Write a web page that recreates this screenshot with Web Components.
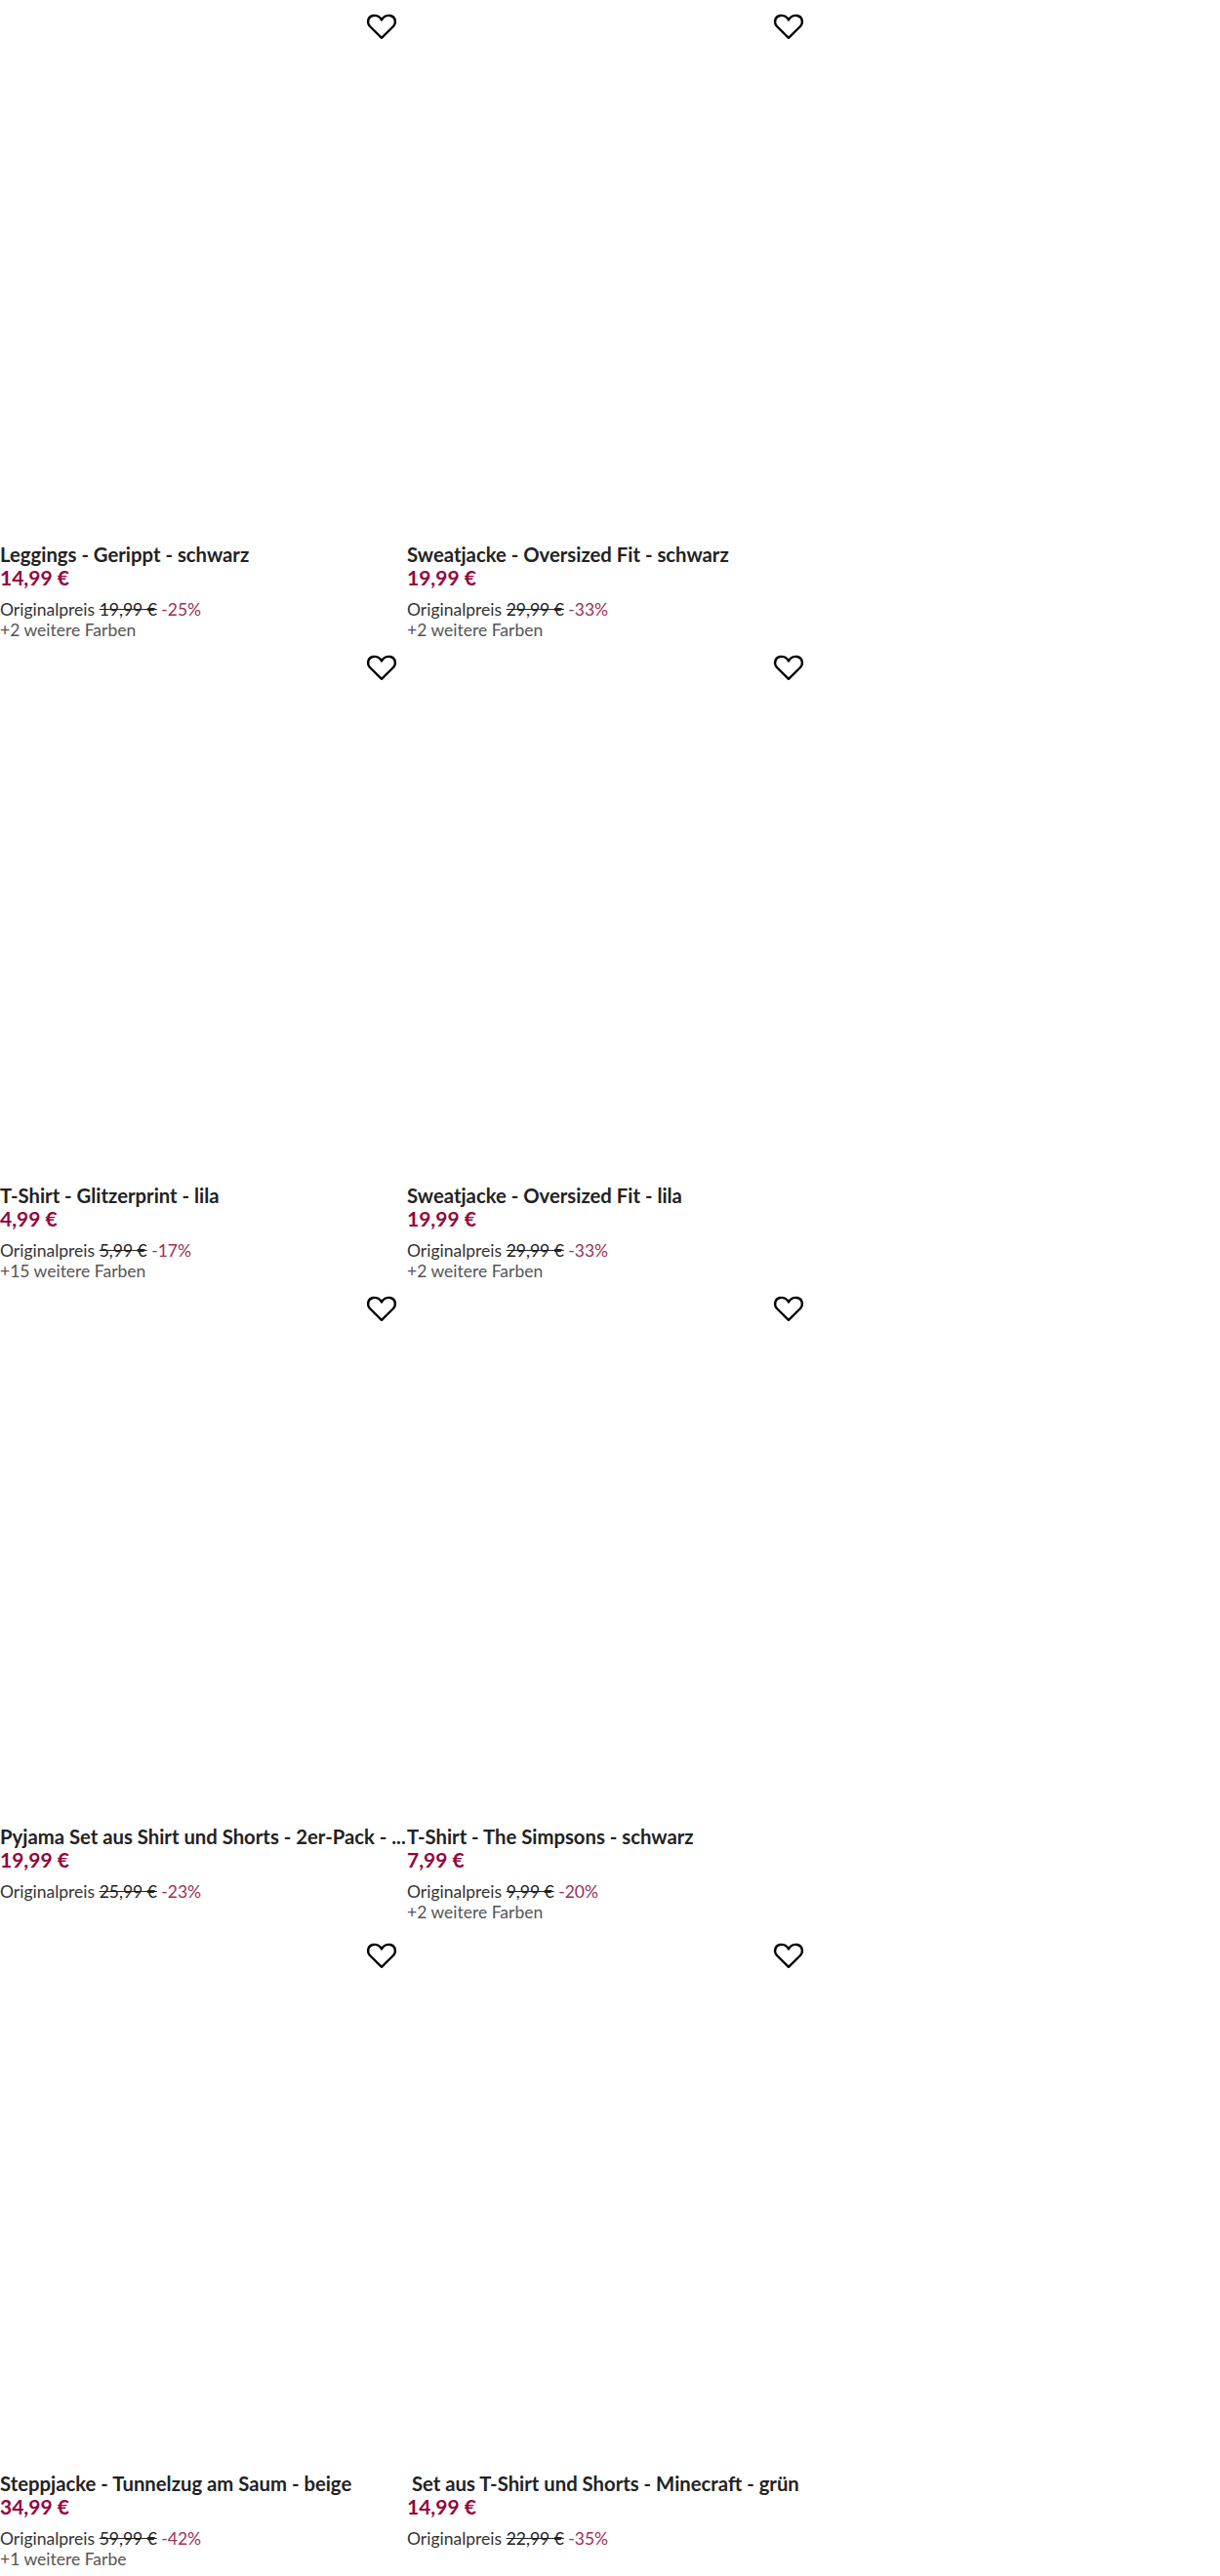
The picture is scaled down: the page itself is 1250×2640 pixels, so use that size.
<!DOCTYPE html>
<html lang="de"><head><meta charset="utf-8"><title>Produkte</title>
<style>html,body{margin:0;background:#fff}body{font-family:"Lato","Liberation Sans",sans-serif}</style></head>
<body>
<product-grid>
<product-card title-text="Leggings - Gerippt - schwarz" price="14,99 €" orig="19,99 €" off="-25%" more="+2 weitere Farben"></product-card>
<product-card title-text="Sweatjacke - Oversized Fit - schwarz" price="19,99 €" orig="29,99 €" off="-33%" more="+2 weitere Farben"></product-card>
<product-card title-text="T-Shirt - Glitzerprint - lila" price="4,99 €" orig="5,99 €" off="-17%" more="+15 weitere Farben"></product-card>
<product-card title-text="Sweatjacke - Oversized Fit - lila" price="19,99 €" orig="29,99 €" off="-33%" more="+2 weitere Farben"></product-card>
<product-card title-text="Pyjama Set aus Shirt und Shorts - 2er-Pack - ..." price="19,99 €" orig="25,99 €" off="-23%"></product-card>
<product-card title-text="T-Shirt - The Simpsons - schwarz" price="7,99 €" orig="9,99 €" off="-20%" more="+2 weitere Farben"></product-card>
<product-card title-text="Steppjacke - Tunnelzug am Saum - beige" price="34,99 €" orig="59,99 €" off="-42%" more="+1 weitere Farbe"></product-card>
<product-card title-text="&nbsp;Set aus T-Shirt und Shorts - Minecraft - grün" price="14,99 €" orig="22,99 €" off="-35%"></product-card>
</product-grid>
<script>
class ProductGrid extends HTMLElement{
  constructor(){super();this.attachShadow({mode:'open'}).innerHTML=`<style>
  :host{display:grid;grid-template-columns:417px 417px;grid-template-rows:657px 657px 663px 663px;width:834px}
  </style><slot></slot>`;}
}
class ProductCard extends HTMLElement{
  connectedCallback(){
    const a=n=>this.getAttribute(n);
    const more=a('more');
    this.attachShadow({mode:'open'}).innerHTML=`<style>
    :host{display:flex;flex-direction:column;min-width:0;color:#1a1a1a;font-family:"Lato","Liberation Sans",sans-serif}
    .media{height:556px;display:flex;justify-content:flex-end;padding:12px 10px 0 0;box-sizing:border-box;flex:none}
    svg{width:32px;height:32px;display:block}
    .t{font-size:20.3px;line-height:24px;font-weight:700;white-space:nowrap;color:#222}
    .p{font-size:21px;line-height:24px;font-weight:700;color:#93063d}
    .o{font-size:17.5px;line-height:21px;margin-top:10px;color:#333;white-space:nowrap}
    .o s{color:#222}.o b{font-weight:400;color:#9a2f58}
    .m{font-size:17.5px;line-height:21px;color:#555}
    </style>
    <div class="media"><svg viewBox="0 0 32 32" fill="none" stroke="#000" stroke-width="2.4" stroke-linejoin="round"><path d="M16 26.800 4 15C.5 11 2 5 7 4c4-.8 7.500 1.500 9 4.500C17.500 5.500 21 3.200 25 4c5 1 6.500 7 3 11z"/></svg></div>
    <div class="t">${a('title-text')}</div>
    <div class="p">${a('price')}</div>
    <div class="o">Originalpreis <s>${a('orig')}</s> <b>${a('off')}</b></div>
    ${more?`<div class="m">${more}</div>`:''}`;
  }
}
customElements.define('product-grid',ProductGrid);
customElements.define('product-card',ProductCard);
</script>
</body></html>
